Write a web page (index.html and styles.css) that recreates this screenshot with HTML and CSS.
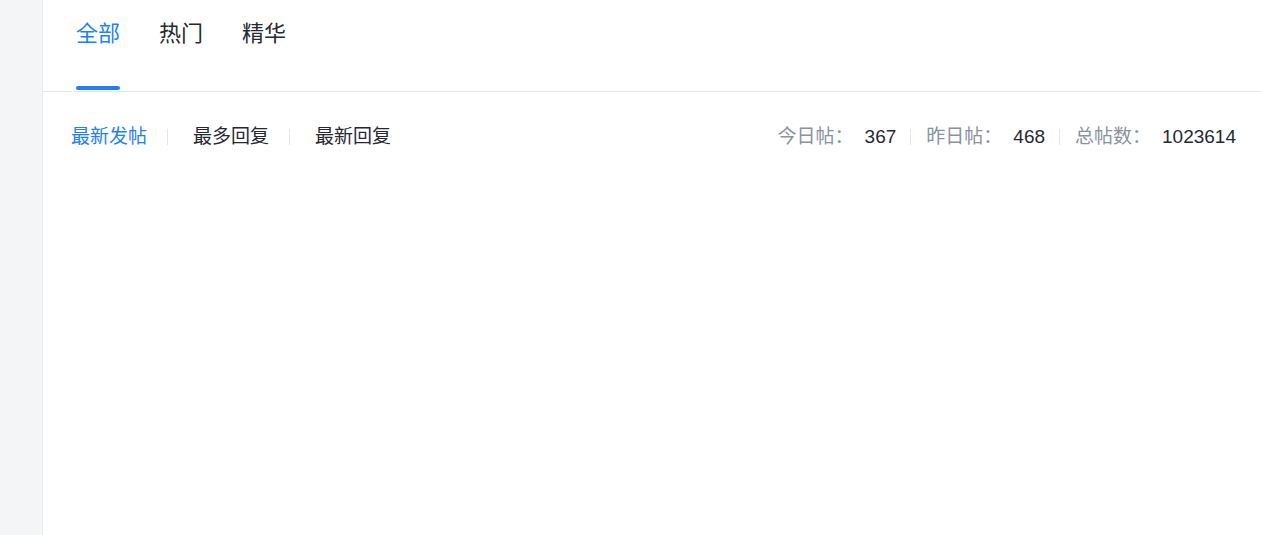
FILE: index.html
```html
<!DOCTYPE html>
<html lang="zh-CN">
<head>
    <meta charset="UTF-8">
    <meta name="viewport" content="width=device-width, initial-scale=1.0">
    <title>帖子列表</title>
    <link rel="stylesheet" href="styles.css">
</head>
<body>
    <aside class="sidebar"></aside>

    <main class="panel">
        <nav class="tabs">
            <a class="tab active" href="#">全部</a>
            <a class="tab" href="#">热门</a>
            <a class="tab" href="#">精华</a>
        </nav>

        <div class="toolbar">
            <ul class="sort">
                <li class="active">最新发帖</li>
                <li class="sep"></li>
                <li>最多回复</li>
                <li class="sep"></li>
                <li>最新回复</li>
            </ul>
            <div class="stats">
                <span class="label">今日帖：</span><span class="num">367</span>
                <span class="sep"></span>
                <span class="label">昨日帖：</span><span class="num">468</span>
                <span class="sep"></span>
                <span class="label">总帖数：</span><span class="num">1023614</span>
            </div>
        </div>
    </main>
</body>
</html>
```

FILE: styles.css
```css
body {
    margin: 0;
    height: 100vh;
    display: flex;
    font-family: "Liberation Sans", "Noto Sans CJK SC", sans-serif;
    color: #252933;
    background: #fff;
    overflow: hidden;
}
.sidebar {
    width: 42px;
    flex-shrink: 0;
    background-color: #f4f5f7;
    border-right: 1px solid #e9ebee;
}
.panel {
    flex: 1;
    background: #fff;
}
.tabs {
    display: flex;
    gap: 39px;
    height: 91px;
    padding: 0 33px;
    border-bottom: 1px solid #e4e6eb;
}
.tab {
    display: flex;
    flex-direction: column;
    justify-content: space-between;
    padding-top: 20px;
    font-size: 22px;
    line-height: 28px;
    color: #252933;
    text-decoration: none;
}
.tab::after {
    content: "";
    display: block;
    height: 4px;
    margin-bottom: 1px;
    border-radius: 2px;
}
.tab.active {
    color: #1e80ff;
}
.tab.active::after {
    background-color: #1e80ff;
}
.toolbar {
    display: flex;
    justify-content: space-between;
    align-items: center;
    padding: 33px 25px 0 28px;
    font-size: 19px;
    line-height: 24px;
}
.sort {
    display: flex;
    align-items: center;
    list-style: none;
    margin: 0;
    padding: 0;
}
.sort li.active {
    color: #1e80ff;
}
.sort .sep {
    width: 1px;
    height: 16px;
    margin: 0 25px 0 20px;
    background-color: #e4e6eb;
}
.stats {
    display: flex;
    align-items: center;
}
.stats .label {
    color: #8a919f;
}
.stats .num {
    margin-left: 11px;
    color: #252933;
}
.stats .sep {
    width: 1px;
    height: 16px;
    margin: 0 15px 0 14px;
    background-color: #e4e6eb;
}
```
